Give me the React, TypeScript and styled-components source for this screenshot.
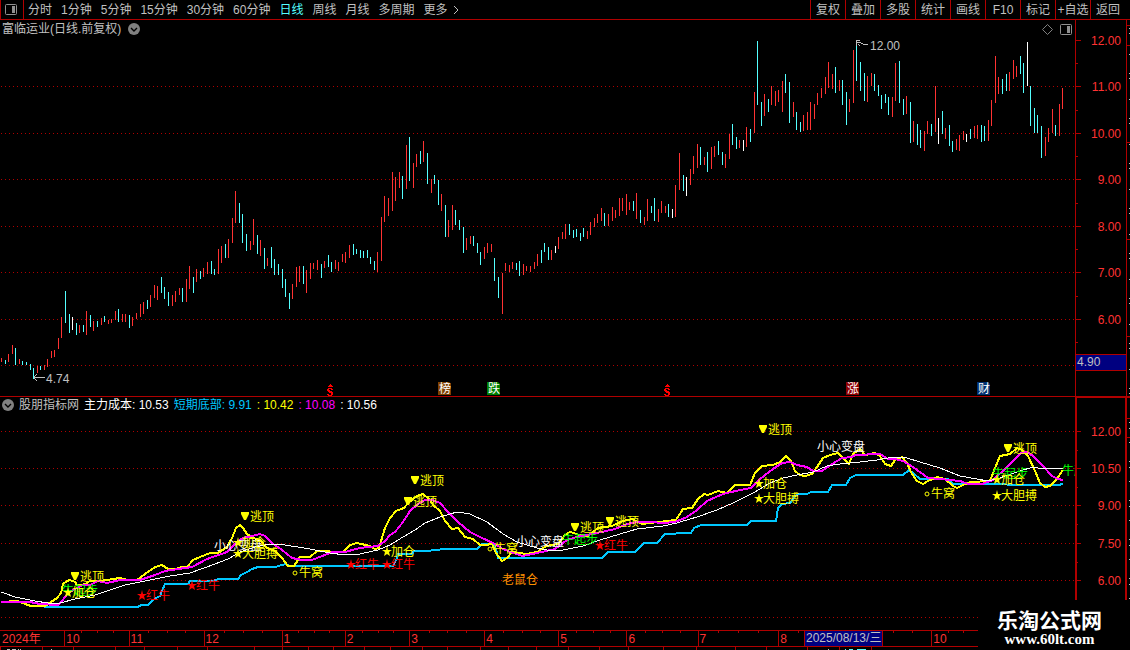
import React from "react";
import styled, { createGlobalStyle } from "styled-components";

const RED = "#b00000";
const BRIGHT = "#ff3232";
const CYAN = "#54ffff";
const GREY = "#c0c0c0";
const YELLOW = "#ffff00";
const MAGENTA = "#ff00ff";
const SKY = "#00c8ff";
const NAVY = "#000080";

const GlobalStyle = createGlobalStyle`
  * { box-sizing: border-box; }
  html, body { margin: 0; background: #000; }
  body {
    color: ${GREY};
    font: 12px/16px "Liberation Sans", "Noto Sans CJK SC", sans-serif;
    overflow-x: hidden;
  }
`;

const Page = styled.main`
  position: relative;
  display: flex;
  flex-direction: column;
  background: #000;
`;

const Toolbar = styled.nav`
  display: flex;
  justify-content: space-between;
  height: 20px;
  border-bottom: 1px solid ${RED};
`;

const Periods = styled.div`
  display: flex;
  align-items: center;
  gap: 9px;
`;

const BareButton = styled.button`
  margin: 0;
  padding: 0;
  border: 0;
  background: none;
  color: inherit;
  font: inherit;
  white-space: nowrap;
  cursor: pointer;
`;

const PanelToggle = styled(BareButton)`
  display: grid;
  place-items: center;
  align-self: stretch;
  width: 24px;
  margin-right: -5px;
  padding-right: 2px;
  border-left: 1px solid ${RED};
  border-right: 1px solid ${RED};
`;

const PeriodButton = styled(BareButton)<{ $active?: boolean }>`
  color: ${(p) => (p.$active ? CYAN : GREY)};
`;

const MoreButton = styled(BareButton)`
  display: flex;
  align-items: center;
  gap: 5px;
`;

const Tools = styled.div`
  display: flex;
  padding-right: 5px;
`;

const ToolButton = styled(BareButton)`
  width: 35px;
  border-left: 1px solid ${RED};
  text-align: center;
`;

const Panel = styled.section`
  position: relative;
`;

const PanelHead = styled.header<{ $gap: number }>`
  position: absolute;
  top: 1px;
  left: 2px;
  right: 0;
  display: flex;
  align-items: center;
  gap: ${(p) => p.$gap}px;
  white-space: nowrap;
`;

const Title = styled.h1`
  margin: 0;
  font: inherit;
`;

const Corner = styled.div`
  display: flex;
  align-items: center;
  gap: 7px;
  margin-left: auto;
  margin-right: 58px;
`;

const RoundButton = styled(BareButton)`
  display: block;
  width: 12px;
  height: 12px;
  line-height: 0;
`;

const Reading = styled.span<{ $color: string }>`
  color: ${(p) => p.$color};
`;

const Plot = styled.svg`
  display: block;
  width: 100%;
  height: auto;
  font: inherit;
`;

const TimeAxis = styled.footer`
  position: relative;
  display: flex;
  height: 17px;
  border-top: 1px solid ${RED};
  border-bottom: 1px solid ${RED};
  color: ${BRIGHT};
`;

const Month = styled.div<{ $span: number; $first?: boolean }>`
  position: relative;
  flex: ${(p) => p.$span} 1 0;
  min-width: 0;
  padding-left: ${(p) => (p.$first ? 2 : 1)}px;
  border-left: ${(p) => (p.$first ? 0 : 1)}px solid ${RED};
  line-height: 16px;
  white-space: nowrap;
`;

const Weeks = styled.div`
  position: absolute;
  inset: 0 0 auto 0;
  display: grid;
  grid-template-columns: repeat(4, 1fr);
  height: 2px;

  i + i {
    border-left: 1px solid ${RED};
  }
`;

const CursorDate = styled.output`
  position: absolute;
  top: 0;
  bottom: 0;
  left: 71.15%;
  width: 79px;
  padding-left: 1px;
  border-left: 1px solid ${RED};
  border-right: 1px solid ${RED};
  background: ${NAVY};
  color: ${GREY};
  line-height: 14px;
  white-space: nowrap;
  overflow: hidden;
`;

const Brand = styled.a`
  position: absolute;
  right: 0;
  bottom: 0;
  display: flex;
  flex-direction: column;
  align-items: center;
  width: 152px;
  height: 50px;
  padding: 8px 9px 0 0;
  background: #000;
  color: #fff;
  text-decoration: none;
`;

const BrandName = styled.strong`
  font: 700 21px/22px "Noto Sans CJK SC", sans-serif;
`;

const BrandUrl = styled.strong`
  font: 700 15px/18px "Liberation Serif", serif;
`;

/* One entry per session: r = up, c = down, w = flat, then high and low. */
const SESSIONS = `
r338-342 c340-344 r334-342 r325-334 c328-345 r339-344 c341-345 c342-345 c344-350 c348-359
r346-353 c346-350 r345-350 r339-347 r331-338 r330-337 r318-329 r297-318 c271-303 c294-313
w297-310 c303-315 r305-313 c305-312 r291-315 c295-307 r301-311 c301-307 r298-305 c296-302
r300-304 r299-303 r291-300 c289-302 r294-302 r294-302 c295-308 r297-306 r293-299 r284-297
r282-294 c280-289 r275-287 r265-278 r266-280 c257-273 c267-279 c272-286 r275-286 r271-282
r268-275 c268-282 r259-282 r246-269 c257-273 r249-262 c251-259 r248-257 r242-254 c241-254
c249-255 r229-254 r226-243 c224-238 r219-238 r198-223 r171-203 c183-203 c194-223 c214-231
r221-230 r199-225 c215-234 r220-236 c228-249 r238-246 c227-248 c239-255 c244-255 c249-268
c259-277 c273-289 r264-279 r247-267 r246-262 c246-264 r250-273 r243-259 r243-249 r240-250
c244-258 r241-248 c235-247 c242-252 r240-249 r242-251 r234-242 r232-243 r225-238 c224-235
c229-234 c230-238 c231-238 c230-238 c237-244 c241-250 r232-252 r197-241 r176-202 r178-196
r152-191 r157-181 r152-168 c156-179 r125-169 c117-161 r143-168 r134-147 c131-144 r121-142
c133-164 r159-173 c155-164 c160-185 r174-191 c185-217 r200-217 r185-210 c190-205 c200-210
c207-233 r218-230 r216-224 c216-226 c223-233 c232-245 r227-239 r223-233 r224-232 c238-261
c257-278 r253-294 r243-251 r245-252 r242-249 c243-250 c241-256 r244-255 r246-251 r246-252
r242-249 r234-246 c230-243 c223-232 c227-240 r230-240 w226-233 r217-229 r212-219 r204-219
c204-215 c210-218 c209-217 c213-221 c208-217 r211-219 r202-215 r198-207 r194-203 r188-201
c193-206 r194-206 r187-201 r190-198 r178-196 r178-191 r174-195 r182-190 c181-191 r173-199
c190-203 r197-205 r179-201 c186-193 c178-201 r189-202 r181-193 r186-193 c184-197 w189-198
r165-197 r133-170 c155-171 w157-176 r149-165 r136-154 r124-148 c127-145 r137-145 c132-152
r127-149 r126-137 c121-135 c132-145 r134-148 r114-139 c104-125 c117-129 r120-128 w120-131
r107-127 c109-122 r72-113 c21-85 c82-106 r74-96 c79-92 r66-85 r71-86 r70-82
r61-92 c54-73 c62-103 r82-97 c92-110 c102-112 r95-111 r92-110 r82-110 r84-99
r73-85 r68-78 r57-74 r42-68 r54-69 c47-73 r60-71 c60-85 c72-105 r79-92
r30-83 c20-61 c42-71 c53-81 r56-82 r53-66 c54-71 c65-76 c75-89 c74-83
c77-95 r77-97 r43-81 c41-83 c79-95 r76-94 c82-123 r101-122 c104-125 c110-128
r111-131 r101-114 c104-116 r66-112 w98-124 c91-114 r108-119 c105-126 c121-132 r119-130
r115-131 r111-120 w114-122 c109-119 r106-118 r105-119 c105-122 c106-121 r100-121 r80-106
r36-83 r57-74 c59-74 c54-71 r52-71 r40-59 r46-57 c36-54 c43-73 w22-66
c66-106 c88-113 c95-113 c106-138 r117-136 r108-122 r89-113 c105-116 r84-116 r68-89
`
  .trim()
  .split(/\s+/)
  .map((s) => {
    const [high, low] = s.slice(1).split("-").map(Number);
    return { kind: s[0], high, low };
  });

const BAR_COLORS: Record<string, string> = { r: BRIGHT, c: CYAN, w: "#fff" };

const FLOOR_LINE =
  "44,210 138,210 141,208 148,208 151,205 156,201 160,199 162,194 165,187 188,187 190,184 213,184 218,182 238,182 241,178 247,175 252,172 258,170 276,170 278,169 286,167 290,169 393,169 395,165 397,161 398,157 412,157 414,154 427,154 445,152 477,152 482,147 493,147 496,152 498,161 602,161 608,155 635,155 644,146 657,146 665,137 688,136 691,136 694,131 701,128 747,128 751,124 776,124 778,111 782,107 790,106 795,99 799,97 807,97 811,95 828,95 832,88 846,88 850,81 856,78 903,78 909,73 913,76 920,82 948,82 953,87 1058,88 1063,87";
const FAST_LINE =
  "1,205 18,204 25,207 31,209 45,209 51,205 57,201 61,196 63,187 67,184 70,183 75,185 77,188 82,188 85,187 90,184 100,184 113,182 120,181 128,183 137,183 145,177 155,170 162,168 168,172 175,172 182,170 187,170 193,163 200,160 210,156 218,156 227,150 232,141 236,131 240,128 243,131 247,137 253,141 260,143 267,151 275,154 282,161 288,169 294,169 300,160 310,160 317,154 343,155 350,148 357,146 370,149 375,152 379,151 385,131 390,121 396,114 404,111 408,106 417,99 423,97 430,103 433,108 440,114 445,124 452,132 458,131 465,140 473,142 480,148 485,148 492,147 496,156 502,164 507,161 512,155 527,157 537,155 542,152 546,149 558,147 565,138 570,135 580,138 588,139 598,131 612,129 623,124 632,122 642,127 650,126 667,124 676,123 683,112 692,111 698,102 704,97 708,98 718,94 727,96 735,88 750,88 755,76 762,69 773,68 780,65 786,59 791,64 795,74 800,78 805,79 812,77 817,70 823,61 830,58 838,56 843,61 849,67 853,57 860,52 865,58 875,56 880,59 885,67 891,69 895,63 902,60 907,66 912,77 917,84 923,87 928,84 937,80 945,82 953,89 957,91 963,88 970,85 990,84 995,71 1000,59 1010,57 1017,51 1022,53 1028,59 1035,74 1040,86 1045,90 1050,89 1056,83 1063,73";
const MID_LINE =
  "1,205 30,205 40,207 58,208 62,204 68,196 75,192 83,188 90,188 98,184 107,186 120,183 140,183 155,178 165,174 178,172 192,170 207,162 227,155 237,145 243,141 248,140 260,137 265,139 272,146 282,153 292,161 302,163 312,163 322,159 333,155 345,155 360,151 378,149 385,144 390,138 395,135 403,125 410,114 418,107 425,103 432,103 440,106 448,115 458,125 470,135 482,141 493,146 503,152 513,156 523,159 537,156 555,152 567,143 577,140 597,136 615,132 627,127 637,125 650,125 663,126 675,125 687,120 697,113 707,104 723,97 740,93 751,91 760,82 773,72 782,66 790,65 797,68 807,70 813,74 822,74 832,67 842,61 852,60 855,58 880,57 888,62 895,62 903,64 913,70 928,81 940,82 960,84 968,87 982,87 993,83 1005,72 1015,62 1021,56 1027,55 1033,59 1042,68 1052,79 1058,82 1063,83";
const SLOW_LINE =
  "1,195 15,200 35,204 48,206 60,206 75,202 95,198 125,188 155,182 170,179 190,176 215,167 228,162 240,155 255,150 270,147 285,148 310,152 330,156 345,158 360,157 378,153 390,148 403,140 415,133 425,126 440,120 457,115 470,117 487,125 503,137 517,145 537,151 547,153 563,153 583,149 600,143 620,137 637,132 663,129 677,126 680,125 697,120 717,113 733,106 753,96 770,86 783,81 797,78 813,75 827,69 840,67 860,65 877,63 893,60 907,61 920,65 940,71 960,79 977,82 988,84 997,82 1008,78 1017,75 1033,70 1043,72 1063,71";

type Mark = "down" | "star" | "ring" | "none";
interface Signal {
  x: number;
  y: number;
  text: string;
  color: string;
  mark: Mark;
}

const signal = (mark: Mark, color: string, text: string, x: number, y: number): Signal => ({ mark, color, text, x, y });

const SIGNALS: Signal[] = [
  signal("none", "#00ff00", "牛起步", 62, 193),
  signal("none", "#fff", "小心变盘", 214, 148),
  signal("none", "#fff", "小心变盘", 516, 144),
  signal("none", "#fff", "小心变盘", 817, 49),
  signal("none", "#00ff00", "牛起步", 562, 142),
  signal("none", "#00ff00", "牛起步", 992, 76),
  signal("none", "#00ff00", "牛起步", 1062, 73),
  signal("none", "#ff9000", "老鼠仓", 502, 182),
  signal("down", YELLOW, "逃顶", 241, 119),
  signal("down", YELLOW, "逃顶", 71, 179),
  signal("down", YELLOW, "逃顶", 411, 83),
  signal("down", YELLOW, "逃顶", 404, 104),
  signal("down", YELLOW, "逃顶", 571, 130),
  signal("down", YELLOW, "逃顶", 606, 124),
  signal("down", YELLOW, "逃顶", 759, 32),
  signal("down", YELLOW, "逃顶", 1004, 51),
  signal("star", YELLOW, "加仓", 63, 195),
  signal("star", YELLOW, "加仓", 233, 145),
  signal("star", YELLOW, "大胆搏", 233, 156),
  signal("star", YELLOW, "加仓", 382, 154),
  signal("star", YELLOW, "加仓", 754, 86),
  signal("star", YELLOW, "大胆搏", 754, 101),
  signal("star", YELLOW, "加仓", 992, 82),
  signal("star", YELLOW, "大胆搏", 992, 98),
  signal("star", "#ff0000", "红牛", 137, 198),
  signal("star", "#ff0000", "红牛", 187, 188),
  signal("star", "#ff0000", "红牛", 346, 167),
  signal("star", "#ff0000", "红牛", 382, 167),
  signal("star", "#ff0000", "红牛", 595, 148),
  signal("ring", YELLOW, "牛窝", 293, 175),
  signal("ring", YELLOW, "牛窝", 488, 151),
  signal("ring", YELLOW, "牛窝", 925, 96),
];

const TEXT_SHIFT: Record<Mark, number> = { down: 9, star: 9, ring: 6, none: 0 };

/* The cursor date lies over September and the logo over November, so these carry no label. */
const MONTHS: [string, number][] = [
  ["2024年", 64],
  ["10", 64],
  ["11", 75],
  ["12", 78],
  ["1", 63],
  ["2", 64],
  ["3", 75],
  ["4", 74],
  ["5", 68],
  ["6", 71],
  ["7", 81],
  ["8", 76],
  ["", 77],
  ["10", 62],
  ["", 138],
];

const PERIODS = ["分时", "1分钟", "5分钟", "15分钟", "30分钟", "60分钟", "日线", "周线", "月线", "多周期"];
const TOOLS = ["复权", "叠加", "多股", "统计", "画线", "F10", "标记", "+自选", "返回"];

const SplitIcon = () => (
  <svg width="12" height="11" viewBox="0 0 12 11" aria-hidden="true">
    <rect x="0.5" y="0.5" width="11" height="10" rx="1" fill="none" stroke="#909090" />
    <rect x="7" y="2" width="3" height="7" fill="#909090" />
  </svg>
);

const ChevronDisc = () => (
  <svg width="12" height="12" viewBox="0 0 12 12" aria-hidden="true">
    <circle cx="6" cy="6" r="6" fill="#808080" />
    <path d="M3 5l3 3 3-3" fill="none" stroke="#000" strokeWidth="1.4" />
  </svg>
);

const GridLine = ({ y }: { y: number }) => (
  <path d={`M1 ${y + 0.5}H1075`} stroke={RED} strokeDasharray="1 3" />
);

const Badge = ({ x, fill, text }: { x: number; fill: string; text: string }) => (
  <g>
    <path d={`M${x} 362h11l2 2v11h-13z`} fill={fill} />
    <text x={x + 1} y="373" fill="#fff">
      {text}
    </text>
  </g>
);

const DividendMark = ({ x }: { x: number }) => (
  <path
    transform={`translate(${x} 364)`}
    d="M3 0h1v1h1v1h1v1h-5v-1h1v-1h1zM1 4h4v1h1v1h-2v-1h-2v1h1v1h2v1h1v3h-1v1h-4v-1h-1v-1h2v1h2v-2h-2v-1h-1v-1h-1v-2h1z"
    fill="#ff0000"
  />
);

const PriceChart = () => (
  <Plot viewBox="0 0 1130 376" role="img" aria-label="日线">
    <g shapeRendering="crispEdges">
      {[66, 113, 159, 206, 252, 299, 345].map((y) => (
        <GridLine key={y} y={y} />
      ))}
      {SESSIONS.map(({ kind, high, low }, i) => (
        <rect
          key={i}
          x={Math.round(1.15 + i * 3.549)}
          y={high}
          width="1"
          height={low - high}
          fill={BAR_COLORS[kind]}
        />
      ))}
      <g fill={RED}>
        <rect x="1075" y="0" width="1" height="376" />
        <rect x="1126" y="0" width="1" height="376" />
        {[20, 66, 113, 159, 206, 252, 299].map((y) => (
          <rect key={y} x="1076" y={y} width="5" height="1" />
        ))}
        {[43, 90, 136, 183, 229, 276, 322].map((y) => (
          <rect key={y} x="1076" y={y} width="2" height="1" />
        ))}
        {[5, 25, 122, 219, 316].map((y) => (
          <rect key={y} x="1127" y={y} width="3" height="1" />
        ))}
        <rect x="1076" y="334" width="50" height="17" />
      </g>
      <rect x="1076" y="335" width="50" height="15" fill={NAVY} />
      <path d="M1129.5 8v368" stroke={GREY} strokeDasharray="1 4 1 20 1 18" />
      <DividendMark x={327} />
      <DividendMark x={664} />
      <path d="M34 357.5h11M34 357l3-3M34 358l3 3" stroke={GREY} fill="none" />
      <path d="M856 20.5h4M856.5 20v6M857 22.5h3l4 2h4M858 24l2 2" stroke={GREY} fill="none" />
    </g>
    <Badge x={438} fill="#804000" text="榜" />
    <Badge x={487} fill="#008000" text="跌" />
    <Badge x={846} fill="#900000" text="涨" />
    <Badge x={977} fill="#003070" text="财" />
    <g fill={GREY}>
      <text x="46" y="363">4.74</text>
      <text x="870" y="30">12.00</text>
      <text x="1077" y="346">4.90</text>
    </g>
    <g fill={BRIGHT} textAnchor="end">
      {["12.00", "11.00", "10.00", "9.00", "8.00", "7.00", "6.00"].map((label, i) => (
        <text key={label} x="1121" y={[25, 71, 118, 164, 211, 257, 304][i]}>
          {label}
        </text>
      ))}
    </g>
  </Plot>
);

const SignalMark = ({ x, y, text, color, mark }: Signal) => (
  <g fill={color}>
    {mark === "down" && <path d={`M${x} ${y - 4}h8v2l-3 6h-2l-3-6z`} />}
    {mark === "star" && <path d={`M${x + 5} ${y - 5}l1 4h4l-3 2 1 4-3-2-3 2 1-4-3-2h4z`} />}
    {mark === "ring" && <circle cx={x + 2} cy={y + 1} r="2" fill="none" stroke={color} />}
    <text x={x + TEXT_SHIFT[mark]} y={y + 5}>
      {text}
    </text>
  </g>
);

const IndicatorChart = () => (
  <Plot viewBox="0 0 1130 233" role="img" aria-label="股朋指标网">
    <defs>
      <clipPath id="plot-area">
        <rect width="1075" height="233" />
      </clipPath>
    </defs>
    <g shapeRendering="crispEdges" fill="none">
      {[34, 71, 108, 146, 183, 220].map((y) => (
        <GridLine key={y} y={y} />
      ))}
      <g strokeWidth="2" strokeLinejoin="round">
        <polyline points={FLOOR_LINE} stroke={SKY} />
        <polyline points={FAST_LINE} stroke={YELLOW} />
        <polyline points={MID_LINE} stroke={MAGENTA} />
      </g>
      <polyline points={SLOW_LINE} stroke="#fff" />
    </g>
    <g clipPath="url(#plot-area)">
      {SIGNALS.map((s, i) => (
        <SignalMark key={i} {...s} />
      ))}
    </g>
    <g fill={RED} shapeRendering="crispEdges">
      <rect x="1075" y="0" width="52" height="1" />
      <rect x="1075" y="0" width="2" height="233" />
      <rect x="1125" y="0" width="2" height="233" />
      {[34, 71, 108, 146, 183].map((y) => (
        <rect key={y} x="1077" y={y} width="4" height="1" />
      ))}
      {[53, 90, 127, 165].map((y) => (
        <rect key={y} x="1077" y={y} width="1" height="1" />
      ))}
      {[0, 21, 40].map((y) => (
        <rect key={y} x="1127" y={y} width="3" height="1" />
      ))}
    </g>
    <path d="M1129.5 25v178" stroke={GREY} strokeDasharray="1 5 1 13 1 18" shapeRendering="crispEdges" />
    <g fill={BRIGHT} textAnchor="end">
      {["12.00", "10.50", "9.00", "7.50", "6.00"].map((label, i) => (
        <text key={label} x="1121" y={[39, 76, 113, 151, 188][i]}>
          {label}
        </text>
      ))}
    </g>
  </Plot>
);

const NextPane = () => (
  <Plot viewBox="0 0 1130 3" aria-hidden="true" shapeRendering="crispEdges">
    {[
      0, 42, 73, 115, 144, 177, 207, 254, 282, 308, 333, 364, 390, 422, 447, 480, 508, 536, 568, 599, 628, 663, 696,
      735, 766, 807, 839, 871,
    ].map((x) => (
      <rect key={x} x={x} y="0" width="1" height="3" fill={RED} />
    ))}
    <path d="M7 2.5h3M12 2.5h4M18 2.5h1M20 2.5h1M51 2.5h1M828 2.5h1" stroke={GREY} />
    <path d="M845 2.5h1M849 2.5h4M857 2.5h9" stroke={CYAN} />
  </Plot>
);

export default function App() {
  return (
    <>
      <GlobalStyle />
      <Page>
        <Toolbar>
          <Periods>
            <PanelToggle aria-label="侧栏">
              <SplitIcon />
            </PanelToggle>
            {PERIODS.map((p) => (
              <PeriodButton key={p} $active={p === "日线"}>
                {p}
              </PeriodButton>
            ))}
            <MoreButton>
              更多
              <svg width="6" height="10" viewBox="0 0 6 10" aria-hidden="true">
                <path d="M1 1l4 4-4 4" fill="none" stroke={GREY} />
              </svg>
            </MoreButton>
          </Periods>
          <Tools>
            {TOOLS.map((t) => (
              <ToolButton key={t}>{t}</ToolButton>
            ))}
          </Tools>
        </Toolbar>

        <Panel>
          <PriceChart />
          <PanelHead $gap={7}>
            <Title>富临运业(日线.前复权)</Title>
            <RoundButton aria-label="选项">
              <ChevronDisc />
            </RoundButton>
            <Corner>
              <svg width="11" height="11" viewBox="0 0 11 11" aria-hidden="true">
                <path d="M5.5 .5l5 5-5 5-5-5z" fill="none" stroke="#808080" />
              </svg>
              <SplitIcon />
            </Corner>
          </PanelHead>
        </Panel>

        <Panel>
          <svg width="100%" height="1" display="block" aria-hidden="true">
            <rect width="100%" height="1" fill={RED} />
          </svg>
          <IndicatorChart />
          <PanelHead $gap={5}>
            <RoundButton aria-label="指标选项">
              <ChevronDisc />
            </RoundButton>
            <Reading $color={GREY}>股朋指标网</Reading>
            <Reading $color="#fff">主力成本: 10.53</Reading>
            <Reading $color={SKY}>短期底部: 9.91</Reading>
            <Reading $color={YELLOW}>: 10.42</Reading>
            <Reading $color={MAGENTA}>: 10.08</Reading>
            <Reading $color="#fff">: 10.56</Reading>
          </PanelHead>
        </Panel>

        <TimeAxis>
          {MONTHS.map(([label, span], i) => (
            <Month key={i} $span={span} $first={i === 0}>
              {i > 0 && (
                <Weeks>
                  <i />
                  <i />
                  <i />
                  <i />
                </Weeks>
              )}
              {label}
            </Month>
          ))}
          <CursorDate>2025/08/13/三</CursorDate>
        </TimeAxis>
        <NextPane />
        <Brand href="#">
          <BrandName>乐淘公式网</BrandName>
          <BrandUrl>www.60lt.com</BrandUrl>
        </Brand>
      </Page>
    </>
  );
}
